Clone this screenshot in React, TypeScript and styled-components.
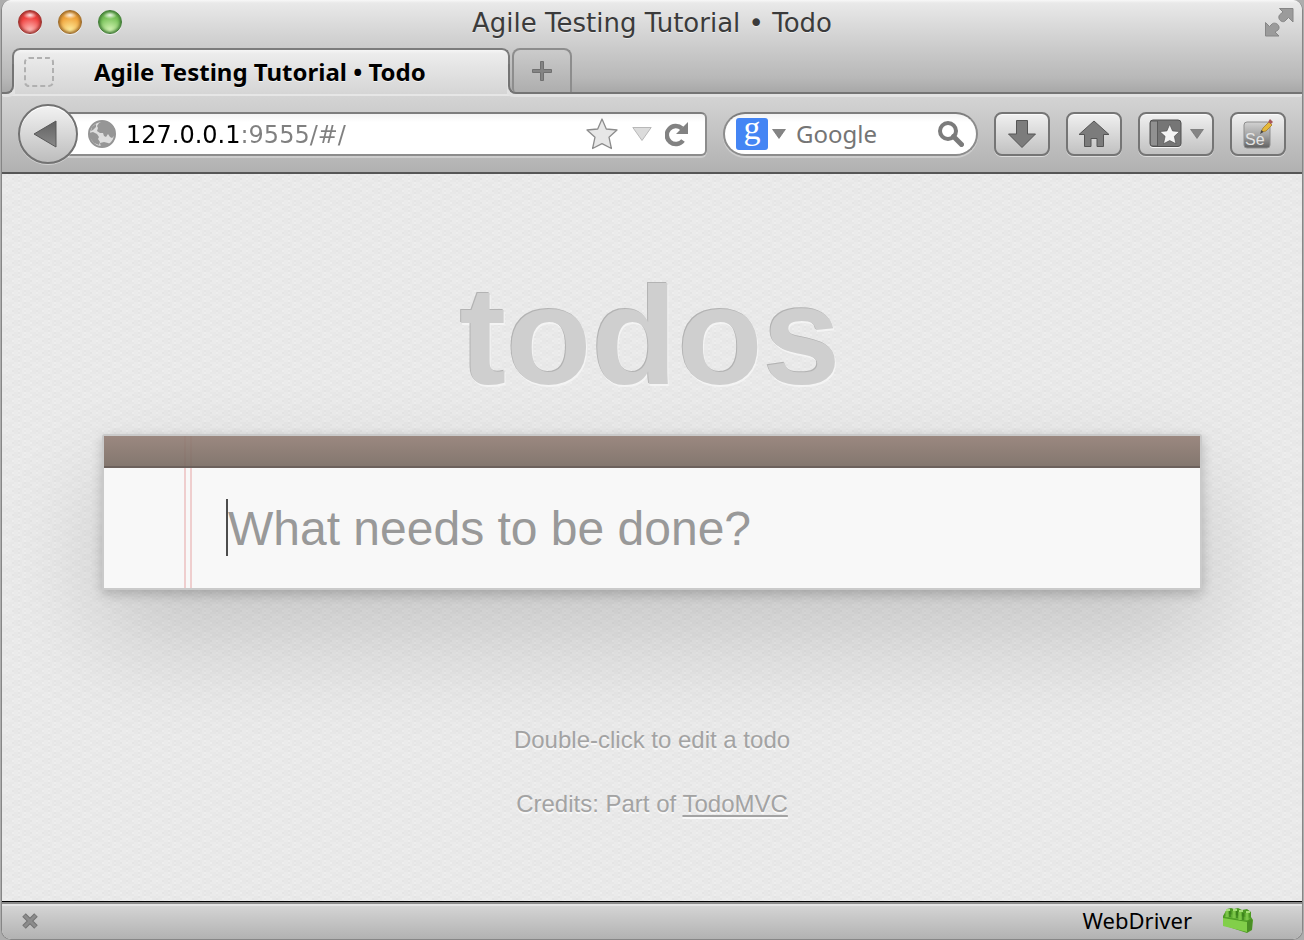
import React from "react";
import styled, { createGlobalStyle } from "styled-components";

const uiFont = `"Noto Sans", "Open Sans", sans-serif`;
const wideFont = `"DejaVu Sans", Verdana, sans-serif`;
const pageFont = `"Liberation Sans", Arial, sans-serif`;

const GlobalStyle = createGlobalStyle`
  *, *::before, *::after { box-sizing: border-box; }
  body { margin: 0; background: #adadad; font-family: ${uiFont}; }
  button { font: inherit; padding: 0; margin: 0; }
  svg { display: block; flex: none; }
`;

const BrowserWindow = styled.div`
  display: flex;
  flex-direction: column;
  min-height: 100vh;
  margin: 0 1px;
  border: 1px solid #868686;
  border-top: 0;
  border-radius: 10px;
  overflow: hidden;
  background: #ebebeb;
`;

const Chrome = styled.header`
  background: linear-gradient(#f8f8f8 0, #e9e9e9 3px, #cbcbcb 48px, #b8b8b8 78px, #a6a6a6 94px);
`;

const TitleBar = styled.div`
  display: grid;
  grid-template-columns: 1fr auto 1fr;
  align-items: center;
  height: 48px;
  padding: 0 8px 4px;
`;

const Lights = styled.div`
  display: flex;
  gap: 16px;
  padding-left: 8px;
`;

const Light = styled.button<{ $rim: string; $mid: string; $glow: string }>`
  width: 24px;
  height: 24px;
  border: 1px solid ${(p) => p.$rim};
  border-radius: 50%;
  background:
    radial-gradient(ellipse 7px 4px at 50% 4px, rgba(255, 255, 255, 0.9), rgba(255, 255, 255, 0) 100%),
    radial-gradient(circle at 50% 90%, ${(p) => p.$glow} 0, ${(p) => p.$mid} 60%);
  box-shadow: inset 0 0 3px 1px ${(p) => p.$rim}, 0 1px 0 rgba(255, 255, 255, 0.6);
`;

const WindowTitle = styled.div`
  padding-top: 2px;
  font-family: ${wideFont};
  font-size: 26px;
  line-height: 32px;
  color: #3b3b3b;
  white-space: nowrap;
  text-shadow: 0 1px 0 rgba(255, 255, 255, 0.5);
`;

const PlainButton = styled.button`
  display: flex;
  border: 0;
  background: none;
`;

const FullScreenButton = styled(PlainButton)`
  justify-self: end;
`;

const TabStrip = styled.div`
  display: flex;
  align-items: flex-end;
  height: 46px;
`;

const LeftFlank = styled.div`
  position: relative;
  z-index: 1;
  width: 12px;
  height: 30px;
  border: solid #747474;
  border-width: 0 2px 2px 0;
  border-bottom-right-radius: 8px;
  box-shadow: 2px 2px 0 1px #e2e2e2;
  clip-path: inset(0 -1px -3px 0);
`;

const Tab = styled.div`
  position: relative;
  display: flex;
  align-items: center;
  gap: 40px;
  flex: 0 1 498px;
  min-width: 0;
  height: 46px;
  margin-left: -2px;
  padding: 2px 12px 0;
  border-radius: 8px 8px 0 0;
  background: linear-gradient(#fafafa 0, #ececec 6px, #d5d5d5);
  &::before {
    content: "";
    position: absolute;
    inset: 0 0 16px 0;
    border: 2px solid #7c7c7c;
    border-bottom: 0;
    border-radius: 8px 8px 0 0;
  }
`;

const TabLabel = styled.div`
  overflow: hidden;
  white-space: nowrap;
  text-overflow: ellipsis;
  font-size: 24px;
  line-height: 32px;
  font-weight: 700;
  color: #000;
  text-shadow: 0 1px 0 rgba(255, 255, 255, 0.7);
`;

const RightFlank = styled.div`
  position: relative;
  z-index: 1;
  display: flex;
  align-items: flex-end;
  flex: 1;
  height: 30px;
  margin-left: -2px;
  padding-left: 2px;
  border: solid #747474;
  border-width: 0 0 2px 2px;
  border-bottom-left-radius: 8px;
  box-shadow: -2px 2px 0 1px #e2e2e2;
  clip-path: inset(-20px 0 -3px -1px);
`;

const NewTab = styled.button`
  display: flex;
  align-items: center;
  justify-content: center;
  width: 60px;
  height: 44px;
  border: 2px solid #8d8d8d;
  border-bottom: 0;
  border-radius: 8px 8px 0 4px;
  background: linear-gradient(#cbcbcb, #aeaeae);
`;

const NavBar = styled.div`
  display: flex;
  align-items: center;
  gap: 16px;
  height: 80px;
  padding: 0 16px;
  border-top: 2px solid #e6e6e6;
  border-bottom: 2px solid #565656;
  background: linear-gradient(#d4d4d4, #b1b1b1);
`;

const Location = styled.div`
  display: flex;
  align-items: center;
  flex: 1;
  min-width: 0;
`;

const BackButton = styled.button`
  position: relative;
  z-index: 1;
  display: flex;
  align-items: center;
  justify-content: center;
  flex: none;
  width: 60px;
  height: 60px;
  padding-right: 6px;
  border: 2px solid #727272;
  border-radius: 50%;
  background: linear-gradient(#f2f2f2, #bdbdbd);
  box-shadow: 0 1px 0 rgba(255, 255, 255, 0.4), inset 0 1px 0 #fff;
`;

const Field = styled.div<{ $round?: boolean }>`
  display: flex;
  align-items: center;
  gap: 10px;
  height: 44px;
  border: 2px solid #8c8c8c;
  border-top-color: #7d7d7d;
  background: linear-gradient(#f3f3f3, #fff 8px);
  box-shadow: 0 2px 0 rgba(255, 255, 255, 0.3);
  ${(p) =>
    p.$round
      ? `flex: 0 1 255px; min-width: 0; border-radius: 22px; padding: 0 12px 0 11px;`
      : `flex: 1; min-width: 0; margin-left: -10px; border-radius: 0 6px 6px 0; padding: 0 16px 0 18px;`}
`;

const TextInput = styled.input`
  flex: 1;
  min-width: 0;
  height: 36px;
  padding: 0;
  border: 0;
  outline: 0;
  background: none;
  font: 24px/36px ${uiFont};
  color: #6c6c6c;
  &::placeholder { color: #757575; opacity: 1; }
`;

const UrlInput = styled(TextInput)`
  height: 40px;
  padding-top: 2px;
  font-family: ${wideFont};
  color: transparent;
  background: linear-gradient(90deg, #000 115px, #808080 115px);
  background-clip: text;
  -webkit-background-clip: text;
`;

const FieldIcons = styled.div`
  display: flex;
  align-items: center;
  gap: 13px;
`;

const EngineButton = styled(PlainButton)`
  align-items: center;
  gap: 4px;
`;

const EngineMark = styled.span`
  display: flex;
  justify-content: center;
  width: 32px;
  height: 32px;
  border-radius: 3px;
  background: #4485f4;
  color: #fff;
  font: 34px/20px "Liberation Serif", serif;
`;

const ToolButton = styled.button<{ $wide?: boolean }>`
  display: flex;
  align-items: center;
  justify-content: center;
  gap: 8px;
  flex: none;
  width: ${(p) => (p.$wide ? 76 : 56)}px;
  height: 44px;
  border: 2px solid #757575;
  border-radius: 8px;
  background: linear-gradient(#f0f0f0, #c1c1c1);
  box-shadow: 0 1px 0 rgba(255, 255, 255, 0.5), inset 0 1px 0 #fafafa;
`;

const Page = styled.main`
  flex: 1;
  padding: 82px 100px 64px;
  font-family: ${pageFont};
  background:
    repeating-conic-gradient(rgba(0, 0, 0, 0.014) 0 25%, transparent 0 50%) 0 0 / 4px 4px,
    repeating-conic-gradient(rgba(0, 0, 0, 0.01) 0 25%, transparent 0 50%) 2px 0 / 12px 4px,
    repeating-conic-gradient(rgba(0, 0, 0, 0.01) 0 25%, transparent 0 50%) 0 2px / 20px 12px,
    #eeeeee;
`;

const Heading = styled.h1`
  margin: 0 0 18px;
  padding-right: 4px;
  text-align: center;
  font-size: 140px;
  line-height: 160px;
  font-weight: 700;
  color: #cfcfcf;
  text-shadow: -1px -1px 0 #b3b3b3, 1px 2px 0 #f4f4f4;
`;

const Card = styled.section`
  position: relative;
  border: 2px solid #cacaca;
  border-radius: 3px 3px 0 0;
  background: #f8f8f8;
  box-shadow: 0 4px 12px rgba(0, 0, 0, 0.2), 0 50px 100px rgba(0, 0, 0, 0.15);
  &::after {
    content: "";
    position: absolute;
    top: 0;
    bottom: 0;
    left: 80px;
    width: 8px;
    border: solid rgba(210, 80, 80, 0.25);
    border-width: 0 2px;
    pointer-events: none;
  }
`;

const CardBand = styled.div`
  position: relative;
  z-index: 1;
  height: 32px;
  border-bottom: 2px solid #6c615c;
  background: linear-gradient(rgba(145, 124, 115, 0.9), rgba(119, 105, 96, 0.9));
`;

const EntryRow = styled.div`
  position: relative;
  display: flex;
  height: 120px;
`;

const Caret = styled.span`
  position: absolute;
  top: 31px;
  left: 122px;
  width: 2px;
  height: 57px;
  background: #4d4d4d;
`;

const TodoInput = styled.input`
  width: 100%;
  padding: 2px 32px 0 124px;
  border: 0;
  outline: 0;
  background: none;
  font: 48px/56px ${pageFont};
  color: #4d4d4d;
  &::placeholder { color: #999; opacity: 1; }
`;

const Info = styled.footer`
  display: flex;
  flex-direction: column;
  gap: 32px;
  margin-top: 134px;
  text-align: center;
  font-size: 24px;
  line-height: 32px;
  color: #a3a3a3;
  text-shadow: 0 2px 0 rgba(255, 255, 255, 0.7);
  p { margin: 0; }
  a {
    color: inherit;
    text-decoration-thickness: 2px;
    text-underline-offset: 3px;
  }
`;

const StatusBar = styled.footer`
  display: flex;
  align-items: center;
  gap: 30px;
  height: 38px;
  padding: 0 48px 0 20px;
  border-top: 1px solid #000;
  box-shadow: inset 0 2px 0 #8a8a8a, inset 0 4px 0 #e4e4e4;
  background: linear-gradient(#d8d8d8, #b2b2b2);
`;

const StatusText = styled.span`
  margin-left: auto;
  padding-bottom: 2px;
  font-size: 22px;
  line-height: 32px;
  color: #000;
`;

const starPath = "M17 2l4.3 10 10.7 1-8 7.2 2.4 11.3L17 26.600l-9.400 4.900L10 20.200 2 13l10.700-1z";

const FullScreenIcon = () => (
  <svg width="30" height="30" viewBox="0 0 30 30" fill="#9b9b9b" stroke="#868686" strokeWidth="1">
    <path d="M15.500 1.500H29V15l-4.500-4.500-3.500 3.500c-1.500 1.500-5 .5-6-2.500-.5-2 .2-3.500 1.500-4.500l2.500-2z" />
    <path d="M1.500 15.500l4 4 2.500-2.500c1.500-1.500 5-1 6.500 1.500 1 2 .5 3.500-.5 4.500l-3 2 4 4H1.500z" />
  </svg>
);

const DashedIcon = () => (
  <svg width="30" height="30" viewBox="0 0 30 30" fill="none" stroke="#b0b0b0" strokeWidth="2">
    <rect x="1" y="1" width="28" height="28" rx="4" strokeDasharray="5 3" />
  </svg>
);

const PlusIcon = () => (
  <svg width="20" height="20" viewBox="0 0 20 20" fill="#848484" stroke="#707070" strokeWidth="1">
    <path d="M8.500.5h3v8h8v3h-8v8h-3v-8h-8v-3h8z" />
  </svg>
);

const BackIcon = () => (
  <svg width="26" height="28" viewBox="0 0 26 28">
    <defs>
      <linearGradient id="back" x2="0" y2="1">
        <stop stopColor="#626262" />
        <stop offset="1" stopColor="#898989" />
      </linearGradient>
    </defs>
    <path d="M2 14L24 1v26z" fill="url(#back)" stroke="#585858" />
  </svg>
);

const GlobeIcon = () => (
  <svg width="28" height="28" viewBox="0 0 28 28">
    <circle cx="14" cy="14" r="13" fill="#dedede" stroke="#949494" strokeWidth="2" />
    <path d="M11 3c5-3 12-1 15 5l1 7-3 3-2-1-2-3-2 3-2-1-1-3h-3l-3-2 1-3-1-2z" fill="#969696" />
    <path d="M1 13l4-1 4 2 2 3-1 2 2 3-1 3-5-2-4-5z" fill="#969696" />
    <path d="M12 23l4-1 4 1 2 1-4 3h-5z" fill="#969696" />
    <path d="M4 7l4-3v3l-3 3-2 1z" fill="#969696" />
  </svg>
);

const StarIcon = () => (
  <svg width="34" height="34" viewBox="0 0 34 34">
    <path d={starPath} fill="#e7e7e7" stroke="#8c8c8c" strokeWidth="1.300" strokeLinejoin="round" />
  </svg>
);

const DropIcon = ({ size = 14, light = false }: { size?: number; light?: boolean }) => (
  <svg width={size} height={size * 0.7} viewBox="0 0 20 14">
    <path d="M.8.5h18.400L10 13.500z" fill={light ? "#dcdcdc" : "#848484"} stroke={light ? "#b8b8b8" : "#707070"} />
  </svg>
);

const ReloadIcon = () => (
  <svg width="24" height="26" viewBox="0 0 24 26">
    <path d="M18 19.500A9 9 0 1 1 17 7.500" fill="none" stroke="#828282" strokeWidth="4.500" />
    <path d="M23 1v12H11z" fill="#828282" />
  </svg>
);

const SearchIcon = () => (
  <svg width="26" height="26" viewBox="0 0 26 26" fill="none" stroke="#7b7b7b">
    <circle cx="10" cy="10" r="8" strokeWidth="4" />
    <path d="M15.500 15.500l8 8" strokeWidth="5" strokeLinecap="round" />
  </svg>
);

const DownloadIcon = () => (
  <svg width="30" height="30" viewBox="0 0 30 30">
    <path d="M9.500 1.500h11V15h8L15 28.500 1.500 15h8z" fill="#7c7c7c" stroke="#555" />
  </svg>
);

const HomeIcon = () => (
  <svg width="32" height="28" viewBox="0 0 32 28">
    <path d="M16 1L1 14.500h5.500v12h6.500v-8h6v8h6.500v-12H31z" fill="#7c7c7c" stroke="#555" />
  </svg>
);

const BookmarksIcon = () => (
  <svg width="33" height="30" viewBox="0 0 33 30">
    <rect x="1" y="2" width="31" height="27" rx="3" fill="#f4f4f4" />
    <rect x="1" y="1" width="31" height="26.500" rx="3" fill="#767676" stroke="#505050" />
    <path d="M2 3h6v23H2z" fill="#919191" />
    <path d="M8.500 2v25" stroke="#5a5a5a" />
    <g transform="translate(9.500 4) scale(.66)">
      <path d={starPath} fill="#f4f4f4" stroke="#4f4f4f" />
    </g>
  </svg>
);

const SeleniumIcon = () => (
  <svg width="32" height="32" viewBox="0 0 32 32">
    <defs>
      <linearGradient id="se" x2="0" y2="1">
        <stop stopColor="#d2d2d2" />
        <stop offset=".5" stopColor="#a5a5a5" />
        <stop offset="1" stopColor="#606060" />
      </linearGradient>
    </defs>
    <rect x="2" y="4" width="26" height="26" rx="3" fill="url(#se)" stroke="#8e8e8e" />
    <text x="3" y="27" fontFamily="Liberation Sans, sans-serif" fontSize="16" fill="#e4e4e4">Se</text>
    <path d="M19 14l2-4 6-6 3 3-6 6z" fill="#e5b83a" stroke="#b08a3a" />
    <path d="M26 4l2-3 3 3-2 2z" fill="#a8575a" />
    <path d="M18 16l1.500-4 2 2z" fill="#444" />
  </svg>
);

const CrossIcon = () => (
  <svg width="16" height="16" viewBox="0 0 16 16">
    <path d="M2 2l12 12M14 2L2 14" stroke="#737373" strokeWidth="5" />
    <path d="M2.500 2.500l11 11M13.500 2.500l-11 11" stroke="#8c8c8c" strokeWidth="3" />
  </svg>
);

const BrickIcon = () => (
  <svg width="32" height="28" viewBox="0 0 32 28">
    <path d="M1 9l4-7 4-1 3 1 4-1 4 2 5-1 4 3v5l2 3-1 10-5 3L1 18z" fill="#4d9a24" />
    <path d="M1 11l24 4v10L1 19z" fill="#82cf4a" />
    <path d="M25 15l5-3v10l-5 3z" fill="#4a8f25" />
    <path d="M2 10l5-3 22 4-4 3z" fill="#5fae33" />
    <path d="M5 4v6M12 4v7M18 5v8M25 6v7" stroke="#7cc548" strokeWidth="3" />
    <path d="M4 3h4M11 3h4M17 4h4M24 5h4" stroke="#a6e078" strokeWidth="2" />
    <path d="M8 4v6M15 4v7M21 6v7" stroke="#2f6f16" strokeWidth="1" />
  </svg>
);

export default function App() {
  return (
    <>
      <GlobalStyle />
      <BrowserWindow>
        <Chrome>
          <TitleBar>
            <Lights>
              <Light aria-label="Close window" $rim="#9b3430" $mid="#f0413f" $glow="#ffc4c0" />
              <Light aria-label="Minimize window" $rim="#9b6a2a" $mid="#f0a43c" $glow="#fff0a0" />
              <Light aria-label="Zoom window" $rim="#3f7a35" $mid="#79c25a" $glow="#d8f7b8" />
            </Lights>
            <WindowTitle>Agile Testing Tutorial • Todo</WindowTitle>
            <FullScreenButton aria-label="Full screen">
              <FullScreenIcon />
            </FullScreenButton>
          </TitleBar>
          <TabStrip>
            <LeftFlank />
            <Tab>
              <DashedIcon />
              <TabLabel>Agile Testing Tutorial • Todo</TabLabel>
            </Tab>
            <RightFlank>
              <NewTab aria-label="New tab">
                <PlusIcon />
              </NewTab>
            </RightFlank>
          </TabStrip>
        </Chrome>
        <NavBar>
          <Location>
            <BackButton aria-label="Back">
              <BackIcon />
            </BackButton>
            <Field>
              <GlobeIcon />
              <UrlInput aria-label="Address" defaultValue="127.0.0.1:9555/#/" />
              <FieldIcons>
                <PlainButton aria-label="Bookmark this page">
                  <StarIcon />
                </PlainButton>
                <PlainButton aria-label="Show history">
                  <DropIcon size={20} light />
                </PlainButton>
                <PlainButton aria-label="Reload">
                  <ReloadIcon />
                </PlainButton>
              </FieldIcons>
            </Field>
          </Location>
          <Field $round>
            <EngineButton aria-label="Choose search engine">
              <EngineMark>g</EngineMark>
              <DropIcon />
            </EngineButton>
            <TextInput aria-label="Search" placeholder="Google" />
            <PlainButton aria-label="Run search">
              <SearchIcon />
            </PlainButton>
          </Field>
          <ToolButton aria-label="Downloads">
            <DownloadIcon />
          </ToolButton>
          <ToolButton aria-label="Home">
            <HomeIcon />
          </ToolButton>
          <ToolButton aria-label="Bookmarks" $wide>
            <BookmarksIcon />
            <DropIcon />
          </ToolButton>
          <ToolButton aria-label="Selenium IDE">
            <SeleniumIcon />
          </ToolButton>
        </NavBar>
        <Page>
          <Heading>todos</Heading>
          <Card>
            <CardBand />
            <EntryRow>
              <TodoInput aria-label="New todo" placeholder="What needs to be done?" />
              <Caret />
            </EntryRow>
          </Card>
          <Info>
            <p>Double-click to edit a todo</p>
            <p>
              Credits: Part of <a href="#todomvc">TodoMVC</a>
            </p>
          </Info>
        </Page>
        <StatusBar>
          <PlainButton aria-label="Close status bar">
            <CrossIcon />
          </PlainButton>
          <StatusText>WebDriver</StatusText>
          <BrickIcon />
        </StatusBar>
      </BrowserWindow>
    </>
  );
}
